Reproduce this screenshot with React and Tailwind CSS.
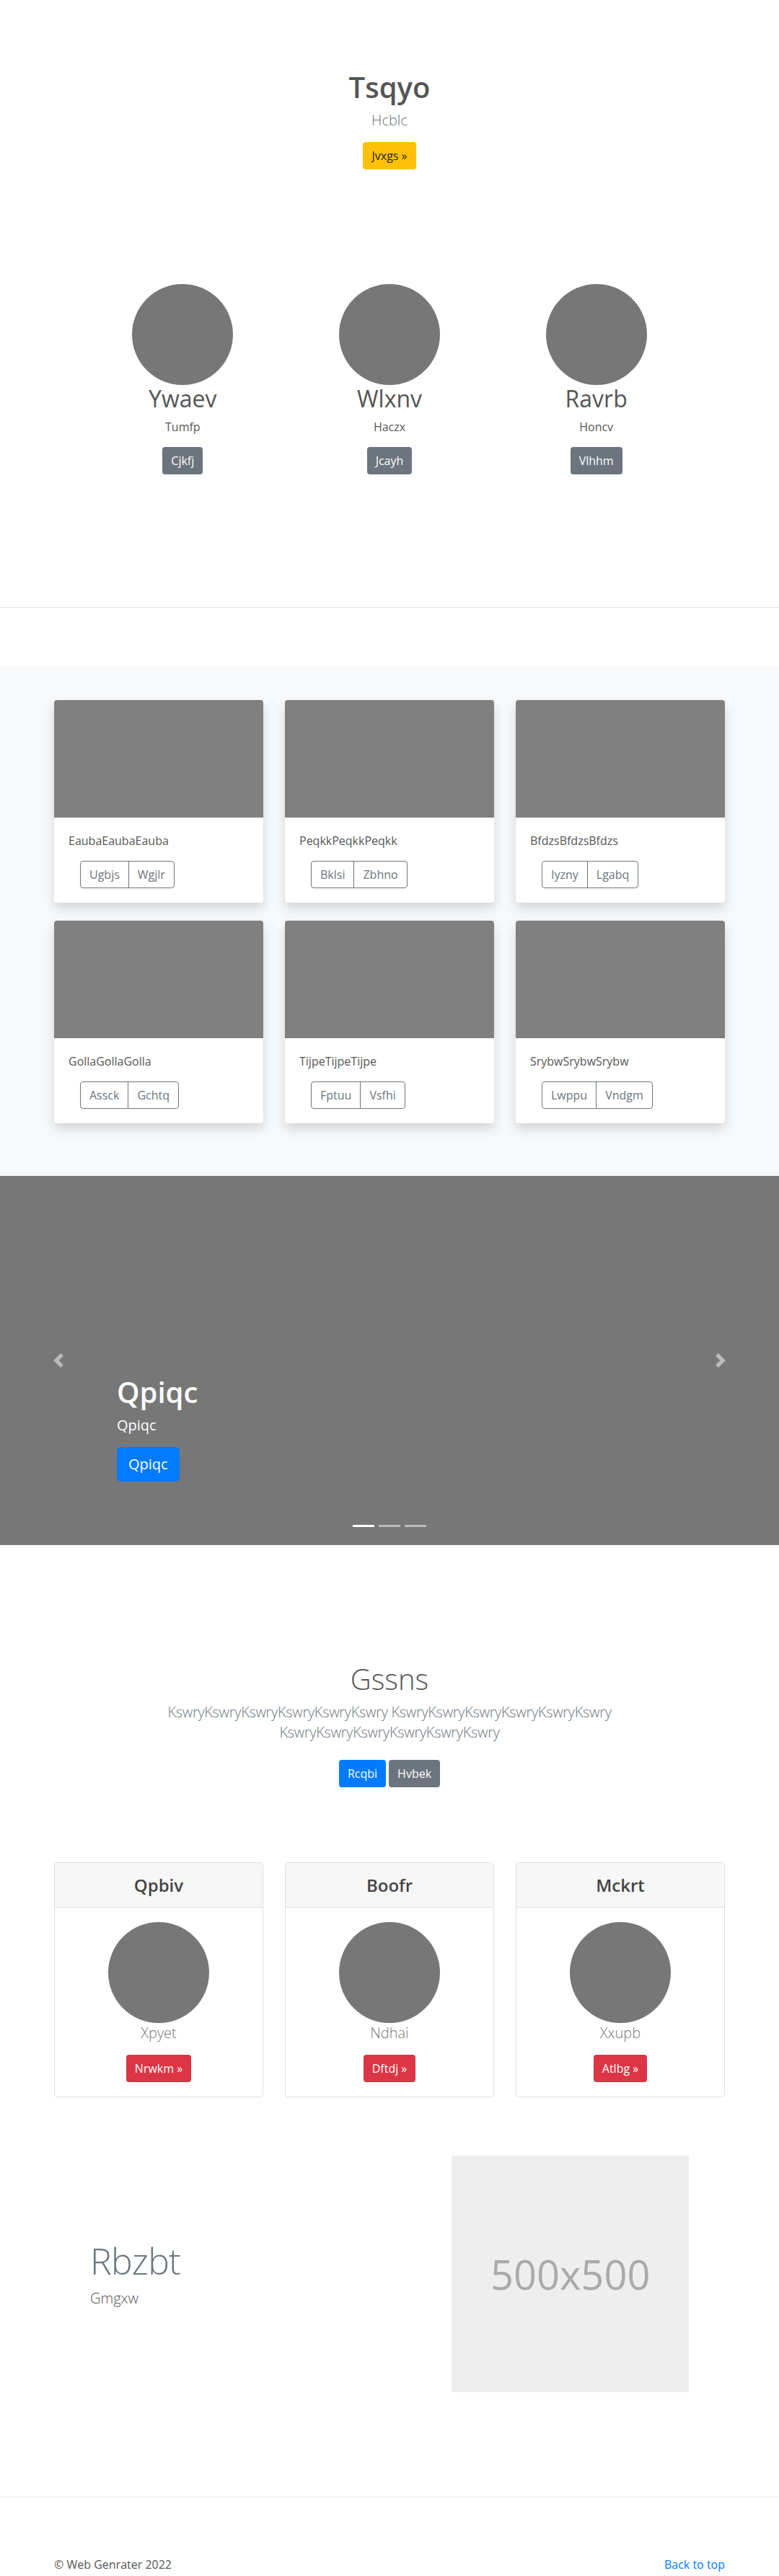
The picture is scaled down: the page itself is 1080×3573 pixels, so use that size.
const people = [
  { name: 'Ywaev', sub: 'Tumfp', btn: 'Cjkfj' },
  { name: 'Wlxnv', sub: 'Haczx', btn: 'Jcayh' },
  { name: 'Ravrb', sub: 'Honcv', btn: 'Vlhhm' },
];

const albums = [
  { text: 'EaubaEaubaEauba', a: 'Ugbjs', b: 'Wgjlr' },
  { text: 'PeqkkPeqkkPeqkk', a: 'Bklsi', b: 'Zbhno' },
  { text: 'BfdzsBfdzsBfdzs', a: 'Iyzny', b: 'Lgabq' },
  { text: 'GollaGollaGolla', a: 'Assck', b: 'Gchtq' },
  { text: 'TijpeTijpeTijpe', a: 'Fptuu', b: 'Vsfhi' },
  { text: 'SrybwSrybwSrybw', a: 'Lwppu', b: 'Vndgm' },
];

const plans = [
  { title: 'Qpbiv', name: 'Xpyet', btn: 'Nrwkm »' },
  { title: 'Boofr', name: 'Ndhai', btn: 'Dftdj »' },
  { title: 'Mckrt', name: 'Xxupb', btn: 'Atlbg »' },
];

function Chevron({ flip }) {
  return (
    <svg width="20" height="20" viewBox="0 0 8 8" fill="#fff" className={flip ? 'rotate-180' : ''}>
      <path d="M5.25 0l-4 4 4 4 1.5-1.5L4.25 4l2.5-2.5L5.25 0z" />
    </svg>
  );
}

export default function App() {
  return (
    <div className="font-['Open_Sans','Noto_Sans',sans-serif] text-[#555] bg-white leading-[1.5]">
      {/* Hero */}
      <section className="pt-[97px] text-center">
        <h1 className="text-[40px] leading-[1.2] font-semibold mb-2">Tsqyo</h1>
        <p className="text-xl font-light text-[#6c757d] mb-4">Hcblc</p>
        <button className="bg-[#ffc107] text-[#212529] rounded h-[38px] px-3 text-base">Jvxgs »</button>
      </section>

      {/* Circles */}
      <section className="w-[860px] mx-auto grid grid-cols-3 mt-[159px]">
        {people.map((p) => (
          <div key={p.name} className="flex flex-col items-center text-center">
            <div className="w-[140px] h-[140px] rounded-full bg-[#777]" />
            <h2 className="text-[32px] leading-[1.2] font-normal mb-2">{p.name}</h2>
            <p className="text-base mb-4">{p.sub}</p>
            <button className="bg-[#6c757d] text-white rounded h-[38px] px-3 text-base">{p.btn}</button>
          </div>
        ))}
      </section>

      <hr className="mt-[184px] border-0 border-t border-[#e5e5e5]" />

      {/* Album */}
      <section className="mt-[80px] bg-[#f8f9fa] pt-12 pb-[73px]">
        <div className="w-[930px] mx-auto grid grid-cols-3 gap-x-[30px] gap-y-[25px]">
          {albums.map((c) => (
            <div key={c.text} className="bg-white rounded shadow-[0_8px_16px_rgba(0,0,0,0.15)] overflow-hidden">
              <div className="h-[163px] bg-[#808080]" />
              <div className="p-5">
                <p className="text-base mb-4">{c.text}</p>
                <div className="ml-4 inline-flex rounded border border-[#6c757d] text-[#6c757d] h-[38px]">
                  <span className="px-3 flex items-center">{c.a}</span>
                  <span className="px-3 flex items-center border-l border-[#6c757d]">{c.b}</span>
                </div>
              </div>
            </div>
          ))}
        </div>
      </section>

      {/* Carousel */}
      <section className="relative h-[512px] bg-[#777]">
        <div className="absolute left-0 top-0 h-full w-[15%] flex items-center justify-center opacity-50">
          <Chevron />
        </div>
        <div className="absolute right-0 top-0 h-full w-[15%] flex items-center justify-center opacity-50">
          <Chevron flip />
        </div>
        <div className="absolute left-[15%] bottom-[88px] text-white">
          <h1 className="text-[40px] leading-[1.2] font-semibold mb-2">Qpiqc</h1>
          <p className="text-xl mb-4">Qpiqc</p>
          <button className="bg-[#007bff] text-white rounded-md h-[48px] px-4 text-xl">Qpiqc</button>
        </div>
        <div className="absolute bottom-[25px] left-0 right-0 flex justify-center gap-[6px]">
          <span className="w-[30px] h-[3px] bg-white" />
          <span className="w-[30px] h-[3px] bg-white/50" />
          <span className="w-[30px] h-[3px] bg-white/50" />
        </div>
      </section>

      {/* Intro */}
      <section className="pt-[162px] text-center">
        <h1 className="text-[40px] leading-[1.2] font-light mb-2">Gssns</h1>
        <p className="max-w-[700px] mx-auto text-xl font-light text-[#6c757d] tracking-[-0.3px] mb-4">
          KswryKswryKswryKswryKswryKswry KswryKswryKswryKswryKswryKswry KswryKswryKswryKswryKswryKswry
        </p>
        <div className="flex justify-center gap-1 py-2">
          <button className="bg-[#007bff] text-white rounded h-[38px] px-3 text-base">Rcqbi</button>
          <button className="bg-[#6c757d] text-white rounded h-[38px] px-3 text-base">Hvbek</button>
        </div>
      </section>

      {/* Pricing */}
      <section className="mt-[96px] w-[930px] mx-auto grid grid-cols-3 gap-x-[30px]">
        {plans.map((p) => (
          <div key={p.title} className="border border-[#dfdfdf] rounded overflow-hidden text-center">
            <div className="h-[62px] bg-[#f7f7f7] border-b border-[#dfdfdf] flex items-center justify-center">
              <h4 className="text-2xl font-semibold text-[#444]">{p.title}</h4>
            </div>
            <div className="p-5 flex flex-col items-center">
              <div className="w-[140px] h-[140px] rounded-full bg-[#777]" />
              <p className="text-xl font-light text-[#777] mb-4">{p.name}</p>
              <button className="bg-[#dc3545] text-white rounded h-[38px] px-3 text-base">{p.btn}</button>
            </div>
          </div>
        ))}
      </section>

      {/* Featurette */}
      <section className="mt-[81px] w-[830px] mx-auto flex items-center gap-[30px]">
        <div className="w-[472px]">
          <h2 className="text-[50px] leading-[1.2] font-light tracking-[-0.8px] text-[#6c757d] mb-2">Rbzbt</h2>
          <p className="text-xl font-light">Gmgxw</p>
        </div>
        <div className="w-[329px] h-[328px] bg-[#eee] flex items-center justify-center">
          <span className="text-[56px] text-[#aaa]">500x500</span>
        </div>
      </section>

      <hr className="mt-[145px] border-0 border-t border-[#e5e5e5]" />

      <footer className="pt-[81px] w-[930px] mx-auto flex justify-between text-base">
        <p>© Web Genrater 2022</p>
        <a href="#" className="text-[#007bff]">Back to top</a>
      </footer>
    </div>
  );
}
